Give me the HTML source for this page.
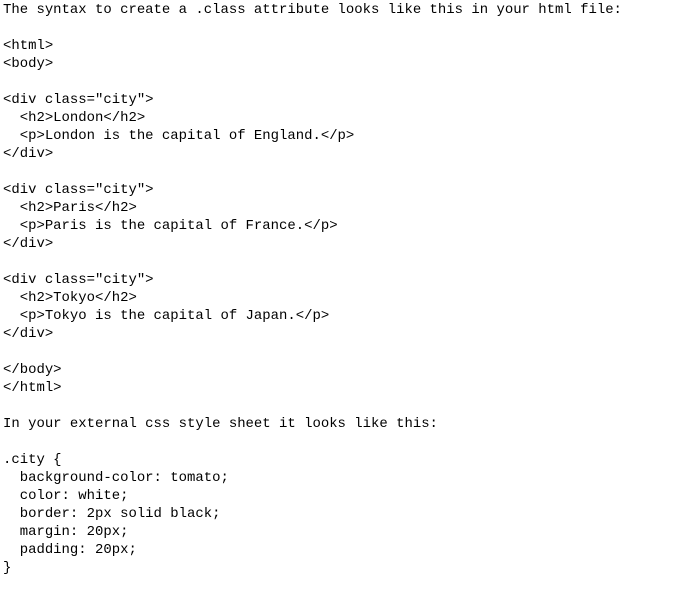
<!DOCTYPE html>
<html><head><style>
html,body{margin:0;padding:0;background:#fff;}
pre{margin:0;position:absolute;left:3px;top:1px;font-family:"Liberation Mono",monospace;font-size:13.95px;line-height:18px;color:#000;}
</style></head><body><pre>The syntax to create a .class attribute looks like this in your html file:

&lt;html&gt;
&lt;body&gt;

&lt;div class="city"&gt;
  &lt;h2&gt;London&lt;/h2&gt;
  &lt;p&gt;London is the capital of England.&lt;/p&gt;
&lt;/div&gt;

&lt;div class="city"&gt;
  &lt;h2&gt;Paris&lt;/h2&gt;
  &lt;p&gt;Paris is the capital of France.&lt;/p&gt;
&lt;/div&gt;

&lt;div class="city"&gt;
  &lt;h2&gt;Tokyo&lt;/h2&gt;
  &lt;p&gt;Tokyo is the capital of Japan.&lt;/p&gt;
&lt;/div&gt;

&lt;/body&gt;
&lt;/html&gt;

In your external css style sheet it looks like this:

.city {
  background-color: tomato;
  color: white;
  border: 2px solid black;
  margin: 20px;
  padding: 20px;
}</pre></body></html>
